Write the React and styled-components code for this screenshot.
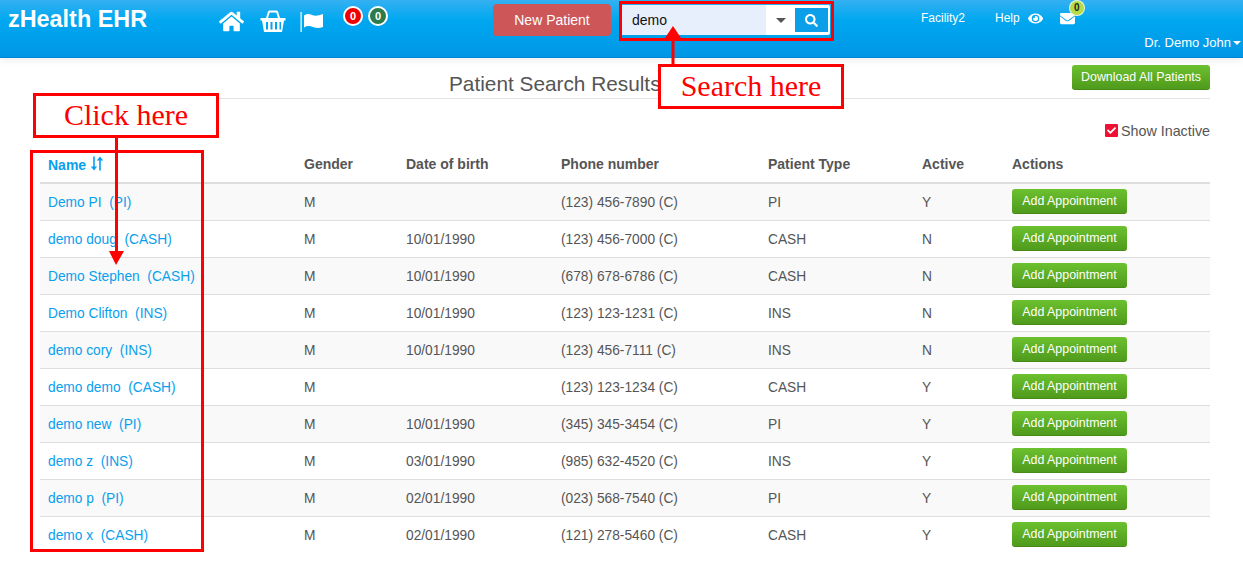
import React from "react";
import styled, { createGlobalStyle } from "styled-components";
import { FaHome, FaEye, FaEnvelope, FaSearch, FaCheck } from "react-icons/fa";

const patients = [
  { name: "Demo PI", type: "PI", gender: "M", dob: "", phone: "(123) 456-7890 (C)", active: "Y" },
  { name: "demo doug", type: "CASH", gender: "M", dob: "10/01/1990", phone: "(123) 456-7000 (C)", active: "N" },
  { name: "Demo Stephen", type: "CASH", gender: "M", dob: "10/01/1990", phone: "(678) 678-6786 (C)", active: "N" },
  { name: "Demo Clifton", type: "INS", gender: "M", dob: "10/01/1990", phone: "(123) 123-1231 (C)", active: "N" },
  { name: "demo cory", type: "INS", gender: "M", dob: "10/01/1990", phone: "(123) 456-7111 (C)", active: "N" },
  { name: "demo demo", type: "CASH", gender: "M", dob: "", phone: "(123) 123-1234 (C)", active: "Y" },
  { name: "demo new", type: "PI", gender: "M", dob: "10/01/1990", phone: "(345) 345-3454 (C)", active: "Y" },
  { name: "demo z", type: "INS", gender: "M", dob: "03/01/1990", phone: "(985) 632-4520 (C)", active: "Y" },
  { name: "demo p", type: "PI", gender: "M", dob: "02/01/1990", phone: "(023) 568-7540 (C)", active: "Y" },
  { name: "demo x", type: "CASH", gender: "M", dob: "02/01/1990", phone: "(121) 278-5460 (C)", active: "Y" },
];

const GlobalStyle = createGlobalStyle`
  html, body {
    margin: 0;
    background: #fff;
    font-family: "Liberation Sans", Arial, sans-serif;
    font-size: 14px;
    color: #555;
  }
`;

const Page = styled.div`
  position: relative;
  width: 1243px;
  height: 572px;
  overflow: hidden;
`;

const Header = styled.header`
  height: 58px;
  display: flex;
  align-items: flex-start;
  padding-left: 8px;
  box-sizing: border-box;
  background: linear-gradient(#35b0f2, #00a8f0 35%, #0096e6);
  border-bottom: 1px solid #0486cf;
  box-shadow: 0 2px 8px rgba(0, 0, 0, 0.08);
  color: #fff;
`;

const Logo = styled.div`
  width: 211px;
  font-size: 23.4px;
  font-weight: 700;
  line-height: 28px;
  margin-top: 5px;
`;

const IconNav = styled.nav`
  width: 274px;
  display: flex;
  align-items: flex-start;
`;

const NavIcon = styled.span`
  width: ${({ $w }) => $w}px;
  height: 24px;
  margin-top: 9px;
  display: flex;
  align-items: center;
`;

const Badge = styled.span`
  width: 16px;
  height: 16px;
  margin: 6px 5px 0 0;
  border: 2px solid #fff;
  border-radius: 50%;
  display: flex;
  align-items: center;
  justify-content: center;
  font-size: 11px;
  font-weight: 700;
  color: #fff;
  background: ${({ $bg }) => $bg};
`;

const NewPatient = styled.button`
  width: 118px;
  height: 32px;
  margin: 4px 11px 0 0;
  padding: 0;
  border: 0;
  border-radius: 4px;
  background: #cd5658;
  color: #fff;
  font: 14px "Liberation Sans", Arial, sans-serif;
`;

const SearchGroup = styled.div`
  width: 208px;
  height: 30px;
  margin-top: 5px;
  display: flex;
  background: #fff;
  border-radius: 2px;
`;

const SearchInput = styled.div`
  width: 144px;
  padding-left: 10px;
  box-sizing: border-box;
  line-height: 30px;
  background: #e8effc;
  color: #111;
  font-size: 14px;
`;

const Caret = styled.span`
  width: 29px;
  display: flex;
  align-items: center;
  justify-content: center;
  &::after {
    content: "";
    border-left: 5px solid transparent;
    border-right: 5px solid transparent;
    border-top: 5px solid #555;
  }
`;

const SearchButton = styled.span`
  width: 33px;
  height: 24px;
  margin-top: 3px;
  display: flex;
  align-items: center;
  justify-content: center;
  background: #0a9fe8;
  font-size: 13px;
  color: #fff;
`;

const UserArea = styled.div`
  margin-left: 91px;
  width: 322px;
  display: flex;
  flex-direction: column;
  font-size: 12px;
`;

const TopLinks = styled.div`
  height: 36px;
  display: flex;
  align-items: center;
`;

const TopLink = styled.span`
  display: flex;
  align-items: center;
  gap: 8px;
  margin-right: ${({ $gap }) => $gap}px;
`;

const MailWrap = styled.span`
  position: relative;
  display: flex;
  font-size: 15px;
`;

const MailBadge = styled.span`
  position: absolute;
  top: -10px;
  left: 10px;
  width: 14px;
  height: 14px;
  border-radius: 50%;
  background: #b5dc48;
  box-shadow: 0 0 0 1px #eef8d8;
  color: #222;
  font-size: 10px;
  font-weight: 700;
  text-align: center;
  line-height: 14px;
`;

const UserName = styled.div`
  display: flex;
  align-items: center;
  justify-content: flex-end;
  gap: 2px;
  font-size: 13px;
  line-height: 14px;
  padding-right: 2px;
  &::after {
    content: "";
    border-left: 4px solid transparent;
    border-right: 4px solid transparent;
    border-top: 4px solid #fff;
  }
`;

const Content = styled.main`
  width: 1170px;
  margin-left: 40px;
`;

const TitleBar = styled.div`
  height: 40px;
  display: flex;
  align-items: flex-start;
  justify-content: space-between;
  border-bottom: 1px solid #e3e3e3;
  & > button {
    margin-top: 7px;
  }
`;

const Title = styled.h1`
  margin: 0 0 0 409px;
  padding-top: 12px;
  font-size: 20.8px;
  line-height: 28px;
  font-weight: 400;
  white-space: nowrap;
  color: #555;
`;

const GreenButton = styled.button`
  padding: 0;
  border: 0;
  border-bottom: 1px solid #468c14;
  border-radius: 3px;
  background: linear-gradient(#6cc12f, #4f9a1c);
  color: #fff;
  font: 12.4px "Liberation Sans", Arial, sans-serif;
  width: ${({ $w }) => $w}px;
  height: ${({ $h }) => $h}px;
`;

const InactiveRow = styled.label`
  height: 51px;
  display: flex;
  align-items: center;
  justify-content: flex-end;
  gap: 3px;
  padding-top: 13px;
  box-sizing: border-box;
  font-size: 14.3px;
`;

const CheckBox = styled.span`
  width: 13px;
  height: 13px;
  margin-top: -2px;
  border-radius: 1px;
  background: #ee1133;
  color: #fff;
  font-size: 9px;
  display: flex;
  align-items: center;
  justify-content: center;
`;

const Table = styled.table`
  width: 1170px;
  border-collapse: collapse;
  table-layout: fixed;
`;

const Th = styled.th`
  width: ${({ $w }) => $w}px;
  height: 33px;
  padding: 0 8px 4px;
  box-sizing: border-box;
  text-align: left;
  font-size: 14px;
  font-weight: 700;
  border-bottom: 2px solid #ddd;
  color: ${({ $active }) => ($active ? "#08a0ee" : "#555")};
`;

const Tr = styled.tr`
  height: 37px;
  background: ${({ $odd }) => ($odd ? "#f9f9f9" : "#fff")};
`;

const Td = styled.td`
  padding: 1px 8px 0;
  font-size: 13.75px;
  border-bottom: ${({ $last }) => ($last ? "0" : "1px solid #ddd")};
  color: #555;
`;

const ActionCell = styled(Td)`
  padding-top: 0;
`;

const NameLink = styled.a`
  color: #08a0ee;
  white-space: pre;
`;

const SortIcon = styled.svg`
  width: 14px;
  height: 15px;
  margin-left: 4px;
  vertical-align: -1px;
`;

const AnnotationBox = styled.div`
  position: absolute;
  box-sizing: border-box;
  left: ${({ $x }) => $x}px;
  top: ${({ $y }) => $y}px;
  width: ${({ $w }) => $w}px;
  height: ${({ $h }) => $h}px;
  padding-bottom: 2px;
  border: 3px solid #f00;
  background: ${({ $fill }) => ($fill ? "#fff" : "transparent")};
  color: #f00;
  font-family: "Liberation Serif", "Times New Roman", serif;
  font-size: 30px;
  display: flex;
  align-items: center;
  justify-content: center;
`;

const ArrowLayer = styled.svg`
  position: absolute;
  left: 0;
  top: 0;
  width: 1243px;
  height: 572px;
  pointer-events: none;
`;

const BasketIcon = () => (
  <svg width="26" height="24" viewBox="0 0 26 24" fill="#fff">
    <path d="M6 9 L8 2.5 Q8.5 1.5 10 1.5 H16 Q17.5 1.5 18 2.5 L20 9 H18 L16.3 3.5 H9.7 L8 9 Z" />
    <path d="M0.5 9 H25.5 V11.5 H24 L22 23 H4 L2 11.5 H0.5 Z M6 13 V20.5 H8 V13 Z M10.5 13 V20.5 H12.5 V13 Z M15 13 V20.5 H17 V13 Z M19.5 13 V20.5 H21 V13 Z" fillRule="evenodd" />
  </svg>
);

const FlagIcon = () => (
  <svg width="24" height="24" viewBox="0 0 24 24" fill="#fff">
    <rect x="0.5" y="3" width="1.2" height="20" />
    <path d="M4 6.5 Q8 4 12 6 T23 5 V18 Q18 20 13 18 T4 18.5 Z" />
  </svg>
);

const App = () => {
  const lastIndex = patients.length - 1;
  return (
    <Page>
      <GlobalStyle />
      <Header>
        <Logo>zHealth EHR</Logo>
        <IconNav>
          <NavIcon $w={41}>
            <FaHome size={25} />
          </NavIcon>
          <NavIcon $w={40}>
            <BasketIcon />
          </NavIcon>
          <NavIcon $w={43}>
            <FlagIcon />
          </NavIcon>
          <Badge $bg="#ee0000">0</Badge>
          <Badge $bg="#2d7a4b">0</Badge>
        </IconNav>
        <NewPatient>New Patient</NewPatient>
        <SearchGroup>
          <SearchInput>demo</SearchInput>
          <Caret />
          <SearchButton>
            <FaSearch />
          </SearchButton>
        </SearchGroup>
        <UserArea>
          <TopLinks>
            <TopLink $gap={30}>Facility2</TopLink>
            <TopLink $gap={17}>
              Help <FaEye size={15} />
            </TopLink>
            <MailWrap>
              <FaEnvelope />
              <MailBadge>0</MailBadge>
            </MailWrap>
          </TopLinks>
          <UserName>Dr. Demo John</UserName>
        </UserArea>
      </Header>
      <Content>
        <TitleBar>
          <Title>Patient Search Results</Title>
          <GreenButton $w={138} $h={25}>
            Download All Patients
          </GreenButton>
        </TitleBar>
        <InactiveRow>
          <CheckBox>
            <FaCheck />
          </CheckBox>
          Show Inactive
        </InactiveRow>
        <Table>
          <thead>
            <tr>
              <Th $w={256} $active>
                Name
                <SortIcon viewBox="0 0 14 15" fill="#08a0ee">
                  <path d="M3.2 0.5h1.6v10h2.4L4 14.5 0.8 10.5h2.4Z" />
                  <path d="M9.2 14.5h1.6v-10h2.4L10 0.5 6.8 4.5h2.4Z" />
                </SortIcon>
              </Th>
              <Th $w={102}>Gender</Th>
              <Th $w={155}>Date of birth</Th>
              <Th $w={207}>Phone number</Th>
              <Th $w={154}>Patient Type</Th>
              <Th $w={90}>Active</Th>
              <Th $w={206}>Actions</Th>
            </tr>
          </thead>
          <tbody>
            {patients.map((p, i) => (
              <Tr key={p.name} $odd={i % 2 === 0}>
                <Td $last={i === lastIndex}>
                  <NameLink>{`${p.name}  (${p.type})`}</NameLink>
                </Td>
                <Td $last={i === lastIndex}>{p.gender}</Td>
                <Td $last={i === lastIndex}>{p.dob}</Td>
                <Td $last={i === lastIndex}>{p.phone}</Td>
                <Td $last={i === lastIndex}>{p.type}</Td>
                <Td $last={i === lastIndex}>{p.active}</Td>
                <ActionCell $last={i === lastIndex}>
                  <GreenButton $w={115} $h={25}>
                    Add Appointment
                  </GreenButton>
                </ActionCell>
              </Tr>
            ))}
          </tbody>
        </Table>
      </Content>

      <ArrowLayer viewBox="0 0 1243 572">
        <rect x="671.5" y="38" width="3" height="26" fill="#f00" />
        <polygon points="673,26 663,41 683,41" fill="#f00" />
        <rect x="115" y="136" width="3" height="116" fill="#f00" />
        <polygon points="116,265 109,251 124,251" fill="#f00" />
      </ArrowLayer>
      <AnnotationBox $x={619} $y={1} $w={215} $h={40} />
      <AnnotationBox $x={658} $y={64} $w={186} $h={45} $fill>
        Search here
      </AnnotationBox>
      <AnnotationBox $x={33} $y={93} $w={186} $h={45} $fill>
        Click here
      </AnnotationBox>
      <AnnotationBox $x={30} $y={150} $w={174} $h={402} />
    </Page>
  );
};

export default App;
